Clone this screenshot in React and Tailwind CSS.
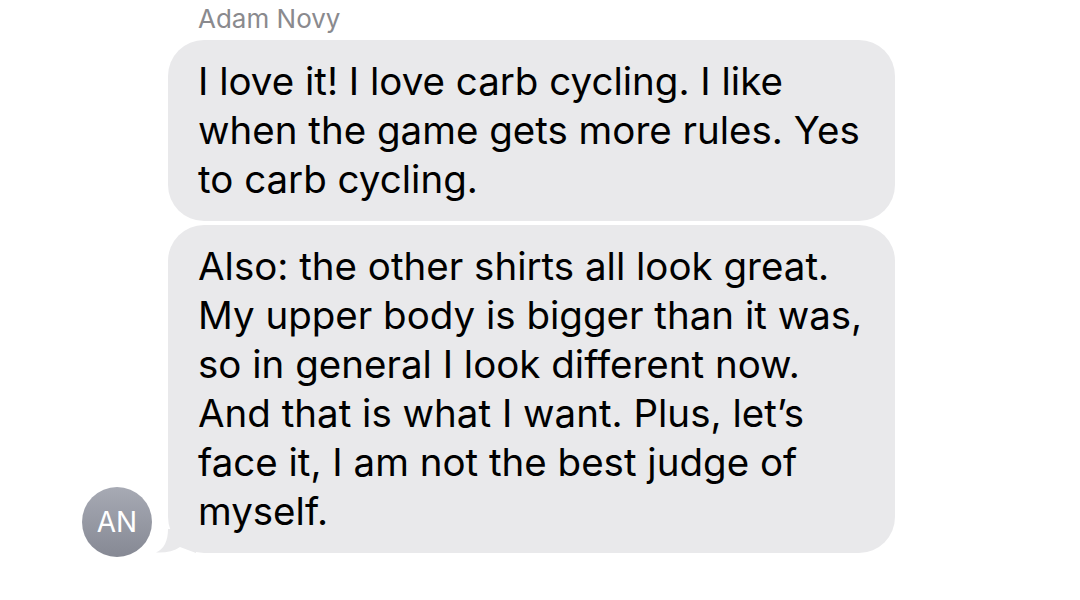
import React from 'react';

const font = { fontFamily: 'Inter, "Liberation Sans", sans-serif' };

const Bubble = ({ lines, tail }) => (
  <div className="relative w-[727px] rounded-[36px] bg-[#e9e9eb] px-[30px] py-[17px]">
    {tail && (
      <svg className="absolute left-[-12px] bottom-0" width="40" height="24" viewBox="0 0 40 24">
        <path d="M12 0 C12 12 8 20 0 23.5 C10 24 18 22 24 18 L40 24 L40 0 Z" fill="#e9e9eb" />
      </svg>
    )}
    <div className="relative text-[38.5px] leading-[49px] text-black">
      {lines.map((l, i) => <div key={i} className="whitespace-nowrap">{l}</div>)}
    </div>
  </div>
);

export default function App() {
  return (
    <div className="w-[1080px] h-[600px] bg-white overflow-hidden" style={font}>
      <div className="pl-[198px] pt-[4px] h-[40px] text-[26px] leading-[30px] text-[#8a8a8e]">Adam Novy</div>
      <div className="flex items-end pl-[82px] gap-[16px]">
        <div className="w-[70px] h-[70px] mb-[-4px] rounded-full bg-gradient-to-b from-[#a7aab4] to-[#868994] flex items-center justify-center text-white text-[28px] shrink-0">
          AN
        </div>
        <div className="flex flex-col gap-[4px]">
          <Bubble lines={['I love it! I love carb cycling. I like', 'when the game gets more rules. Yes', 'to carb cycling.']} />
          <Bubble tail lines={['Also: the other shirts all look great.', 'My upper body is bigger than it was,', 'so in general I look different now.', 'And that is what I want. Plus, let\u2019s', 'face it, I am not the best judge of', 'myself.']} />
        </div>
      </div>
    </div>
  );
}
